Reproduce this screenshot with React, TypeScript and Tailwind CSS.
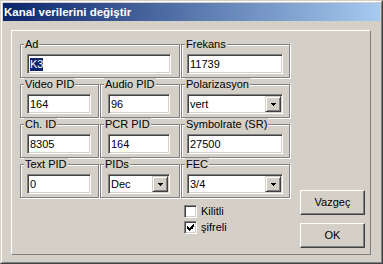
import type { ReactNode } from "react";

function Group({ label, className, children }: { label: string; className?: string; children: ReactNode }) {
  return (
    <div
      className={`relative h-[34px] border border-[#808080] shadow-[inset_1px_1px_0_#fff,1px_1px_0_#fff] ${className ?? ""}`}
    >
      <span className="absolute left-[3px] top-[-7px] bg-[#d4d0c8] px-[1px] leading-[13px]">{label}</span>
      {children}
    </div>
  );
}

function Sunken({ className, children }: { className?: string; children: ReactNode }) {
  return (
    <div
      className={`flex h-[20px] border border-t-[#808080] border-l-[#808080] border-b-white border-r-white bg-white p-[1px] shadow-[inset_1px_1px_0_#404040,inset_-1px_-1px_0_#d4d0c8] ${className ?? ""}`}
    >
      {children}
    </div>
  );
}

function TextBox({ value, selected, className }: { value: string; selected?: boolean; className?: string }) {
  return (
    <Sunken className={className}>
      <div className="flex flex-1 items-center pl-[1px]">
        <span className={selected ? "bg-[#0a246a] text-white" : ""}>{value}</span>
      </div>
    </Sunken>
  );
}

function Select({ value, className }: { value: string; className?: string }) {
  return (
    <Sunken className={className}>
      <div className="flex flex-1 items-center pl-[1px]">{value}</div>
      <div className="flex h-[16px] w-[16px] items-center justify-center border border-t-[#d4d0c8] border-l-[#d4d0c8] border-b-[#404040] border-r-[#404040] bg-[#d4d0c8] shadow-[inset_1px_1px_0_#fff,inset_-1px_-1px_0_#808080]">
        <svg width="5" height="3" viewBox="0 0 5 3" shapeRendering="crispEdges">
          <rect x="0" y="0" width="5" height="1" fill="#000" />
          <rect x="1" y="1" width="3" height="1" fill="#000" />
          <rect x="2" y="2" width="1" height="1" fill="#000" />
        </svg>
      </div>
    </Sunken>
  );
}

function Checkbox({ label, checked }: { label: string; checked?: boolean }) {
  return (
    <div className="flex h-[13px] items-center gap-[4px]">
      <div className="h-[13px] w-[13px] border border-t-[#808080] border-l-[#808080] border-b-white border-r-white bg-white p-[2px] shadow-[inset_1px_1px_0_#404040,inset_-1px_-1px_0_#d4d0c8]">
        {checked && (
          <svg width="7" height="7" viewBox="0 0 7 7" shapeRendering="crispEdges">
            <path
              fill="#000"
              d="M6 0h1v3H6zM5 1h1v4H5zM4 2h1v3H4zM3 3h1v3H3zM2 4h1v3H2zM1 3h1v3H1zM0 2h1v3H0z"
            />
          </svg>
        )}
      </div>
      <span>{label}</span>
    </div>
  );
}

function Button({ label }: { label: string }) {
  return (
    <div className="flex h-[25px] w-[65px] items-center justify-center border border-t-white border-l-white border-b-[#404040] border-r-[#404040] shadow-[inset_-1px_-1px_0_#808080]">
      {label}
    </div>
  );
}

export default function App() {
  return (
    <div className="h-[264px] w-[383px] border border-t-[#d4d0c8] border-l-[#d4d0c8] border-b-[#404040] border-r-[#404040] bg-[#d4d0c8] font-['Liberation_Sans',Arial,sans-serif] text-[11px] leading-[13px] text-black">
      <div className="flex h-full flex-col border border-t-white border-l-white border-b-[#808080] border-r-[#808080] p-[1px]">
        <div className="flex h-[18px] items-center bg-[linear-gradient(to_right,#0a246a,#a6caf0)] pl-[1px] text-[11.5px] font-bold text-white">
          Kanal verilerini değiştir
        </div>

        <div className="ml-[8px] mt-[9px] flex h-[225px] w-[360px] border border-t-white border-l-white border-b-[#808080] border-r-[#808080] pl-[8px] pt-[13px]">
          <div className="flex flex-col">
            <div className="grid grid-cols-[79px_80px_109px] gap-x-[1px] gap-y-[6px]">
              <Group label="Ad" className="col-span-2">
                <TextBox value="K3" selected className="ml-[6px] mt-[9px] w-[144px]" />
              </Group>
              <Group label="Frekans">
                <TextBox value="11739" className="ml-[5px] mt-[9px] w-[96px]" />
              </Group>

              <Group label="Video PID">
                <TextBox value="164" className="ml-[6px] mt-[9px] w-[64px]" />
              </Group>
              <Group label="Audio PID">
                <TextBox value="96" className="ml-[7px] mt-[9px] w-[62px]" />
              </Group>
              <Group label="Polarizasyon">
                <Select value="vert" className="ml-[5px] mt-[9px] w-[96px]" />
              </Group>

              <Group label="Ch. ID">
                <TextBox value="8305" className="ml-[6px] mt-[9px] w-[64px]" />
              </Group>
              <Group label="PCR PID">
                <TextBox value="164" className="ml-[7px] mt-[9px] w-[62px]" />
              </Group>
              <Group label="Symbolrate (SR)">
                <TextBox value="27500" className="ml-[5px] mt-[9px] w-[96px]" />
              </Group>

              <Group label="Text PID">
                <TextBox value="0" className="ml-[6px] mt-[9px] w-[64px]" />
              </Group>
              <Group label="PIDs">
                <Select value="Dec" className="ml-[7px] mt-[9px] w-[62px]" />
              </Group>
              <Group label="FEC">
                <Select value="3/4" className="ml-[5px] mt-[9px] w-[96px]" />
              </Group>
            </div>

            <div className="ml-[164px] mt-[7px] flex flex-col gap-[3px]">
              <Checkbox label="Kilitli" />
              <Checkbox label="şifreli" checked />
            </div>
          </div>

          <div className="ml-[10px] mt-[146px] flex flex-col gap-[8px]">
            <Button label="Vazgeç" />
            <Button label="OK" />
          </div>
        </div>
      </div>
    </div>
  );
}
